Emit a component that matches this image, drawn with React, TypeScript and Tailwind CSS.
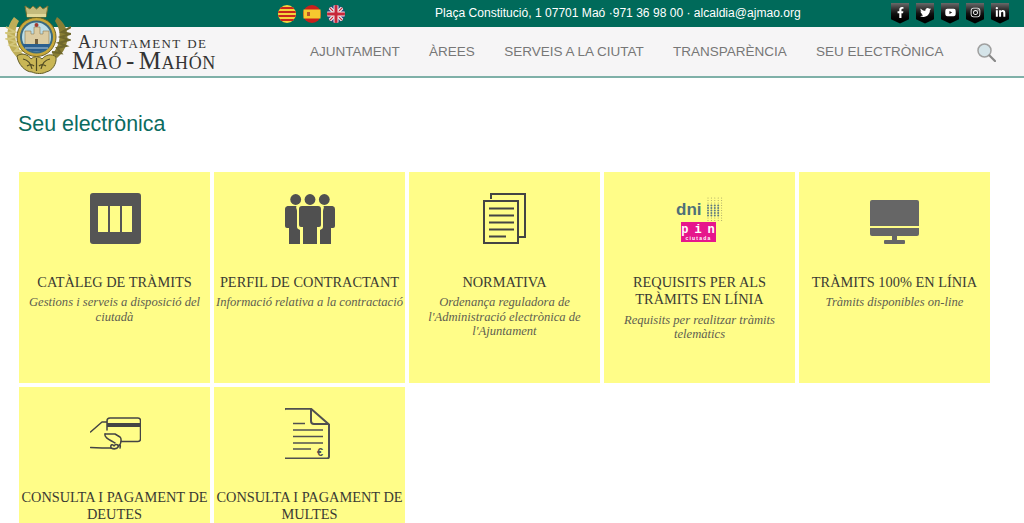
import { FaFacebookF, FaTwitter, FaYoutube, FaInstagram, FaLinkedinIn } from "react-icons/fa";
import type { ReactNode } from "react";

function Crest() {
    return (
        <svg width="66" height="71" viewBox="0 0 66 71">
            {/* laurels */}
            <path d="M9 14C-1 26 0 44 13 55L18 51C9 42 8 28 14 18Z" fill="#bfae58" />
            <path d="M52 14C66 24 66 44 52 55L47 51C56 42 57 28 50 18Z" fill="#8a7f34" />
            <path d="M1 24l9 5-9 1 9 4-8 2 9 3-6 3 9 2-4 4 8 0" fill="none" stroke="#d3c67a" strokeWidth="1.800" />
            <path d="M66 24l-9 5 8 2-9 3 8 3-10 3 7 3-9 2 4 5-9-1" fill="none" stroke="#6f682c" strokeWidth="2.200" />
            {/* bottom scroll */}
            <path d="M12 53c5-4 12-1 14 3 3-3 8-3 11 0 3-4 10-6 14-2 1 7-4 14-10 15-3 2-10 2-14 0-7 0-14-8-15-16Z" fill="#c9b655" stroke="#615b28" strokeWidth="1" />
            <path d="M18 56c5 1 8 5 9 10M45 56c-5 1-8 5-9 10M31.500 55v13M22 63c3-2 5-2 7 0M41 63c-3-2-5-2-7 0" stroke="#4f4a22" strokeWidth="1.200" fill="none" />
            {/* crown */}
            <path d="M20 3l5 3 3-3 3.500 3 3.500-3 3 3 5-3-2 11H22Z" fill="#c4bb7c" stroke="#7d7534" strokeWidth="1" />
            <rect x="22" y="11" width="19" height="3" fill="#e2d99a" />
            {/* shield */}
            <circle cx="31.500" cy="34" r="19.500" fill="#c9a93a" stroke="#6d6226" strokeWidth="1" />
            <circle cx="31.500" cy="34" r="16.500" fill="#3a6a80" />
            <circle cx="31.500" cy="34" r="14.500" fill="#bcdde6" />
            <path d="M20 28h6v3h3v-7h6v7h3v-3h6v14H20Z" fill="#dccca2" stroke="#8b7a55" strokeWidth="0.600" />
            <rect x="30" y="36" width="3" height="6" fill="#6f5c3c" />
            <path d="M17.500 41h28c-2 5-7 7.500-14 7.500s-12-2.500-14-7.500Z" fill="#2b5f8f" />
            <path d="M20 45h23" stroke="#dbe8ee" strokeWidth="0.800" />
            <circle cx="31.500" cy="22" r="2" fill="#a33c30" />
        </svg>
    );
}

function FlagCat() {
    return (
        <svg width="18" height="18" viewBox="0 0 18 18">
            <clipPath id="cat"><circle cx="9" cy="9" r="9" /></clipPath>
            <g clipPath="url(#cat)">
                <rect width="18" height="18" fill="#f5d33a" />
                <path d="M0 2h18v2H0zM0 6h18v2H0zM0 10h18v2H0zM0 14h18v2H0z" fill="#c8261c" />
            </g>
        </svg>
    );
}

function FlagEs() {
    return (
        <svg width="18" height="18" viewBox="0 0 18 18">
            <circle cx="9" cy="9" r="9" fill="#c8201c" />
            <rect x="0.500" y="4.500" width="17" height="9" fill="#f6c92f" />
            <rect x="4" y="7" width="3" height="4" fill="#b8552a" />
        </svg>
    );
}

function FlagUk() {
    return (
        <svg width="18" height="18" viewBox="0 0 18 18">
            <clipPath id="uk"><circle cx="9" cy="9" r="9" /></clipPath>
            <g clipPath="url(#uk)">
                <rect width="18" height="18" fill="#2c3f78" />
                <path d="M0 0L18 18M18 0L0 18" stroke="#eee" strokeWidth="3.500" />
                <path d="M0 0L18 18M18 0L0 18" stroke="#c8273a" strokeWidth="1.200" />
                <path d="M9 0V18M0 9H18" stroke="#eee" strokeWidth="5" />
                <path d="M9 0V18M0 9H18" stroke="#c8273a" strokeWidth="3" />
            </g>
        </svg>
    );
}

function Badge({ children }: { children: ReactNode }) {
    return (
        <div className="w-[18px] h-[21px] flex justify-center pt-[4px] text-white text-[11px] bg-gradient-to-b from-[#6a6a6a] via-[#111] to-[#000] [clip-path:polygon(0_0,100%_0,100%_80%,50%_100%,0_80%)]">
            {children}
        </div>
    );
}

function IconCatalog() {
    return (
        <svg width="51" height="51" viewBox="0 0 51 51">
            <rect width="51" height="51" rx="3" fill="#555" />
            <path d="M8 13h10v26H8zM20 13h10v26H20zM32 13h10v26H32z" fill="#fffd88" />
        </svg>
    );
}

function IconPeople() {
    return (
        <svg width="51" height="51" viewBox="0 0 51 51" fill="#505050">
            <circle cx="10.700" cy="6.500" r="5.400" />
            <circle cx="25" cy="6.500" r="5.400" />
            <circle cx="39.300" cy="6.500" r="5.400" />
            <path d="M17 13h16a3 3 0 0 1 3 3v16a2 2 0 0 1-2 2h-2v17H18V34h-2a2 2 0 0 1-2-2V16a3 3 0 0 1 3-3z" />
            <path d="M2.500 13H11.500C10.500 15 12 16 12 18V34c0 2 2 2 3 3V51H4V35H2a2 2 0 0 1-2-2V16a3 3 0 0 1 2.500-3z" />
            <path d="M47.500 13H38.500C39.500 15 38 16 38 18V34c0 2-2 2-3 3V51H46V35h2a2 2 0 0 0 2-2V16a3 3 0 0 0-2.500-3z" />
        </svg>
    );
}

function IconDocs() {
    return (
        <svg width="51" height="51" viewBox="0 0 51 51" fill="none" stroke="#444" strokeWidth="2">
            <path d="M11 6V1H45V44H39" />
            <rect x="4" y="8" width="34" height="42" />
            <path d="M9 15.500H34M9 22.500H34M9 29.500H34M9 36.500H34M9 43.500H26" strokeWidth="2.200" />
        </svg>
    );
}

function IconDni() {
    const dots = [];
    for (let row = 0; row < 10; row++) {
        for (let col = 0; col < 5; col++) {
            const inner = row > 2 && row < 8 && col < 4;
            dots.push(<circle key={`${row}-${col}`} cx={33 + col * 3.4} cy={5 + row * 2.5} r={inner ? 1 : 0.5} fill={inner ? "#5d7a80" : "#9a9a60"} />);
        }
    }
    return (
        <svg width="51" height="51" viewBox="0 0 51 51">
            {dots}
            <text x="1" y="22" fontFamily="Liberation Sans, sans-serif" fontSize="17" fontWeight="700" fill="#4f7078">dni</text>
            <rect x="6" y="29" width="35" height="20" fill="#e6168c" />
            <text x="26" y="40" textAnchor="middle" fontFamily="Liberation Mono, monospace" fontSize="12" fontWeight="700" letterSpacing="6" fill="#fff">pin</text>
            <text x="23.500" y="47" textAnchor="middle" fontFamily="Liberation Sans, sans-serif" fontSize="5" fontWeight="700" letterSpacing="1.200" fill="#fff">ciutada</text>
        </svg>
    );
}

function IconMonitor() {
    return (
        <svg width="51" height="51" viewBox="1 0 51 51" fill="#666">
            <path d="M3 7H48a2 2 0 0 1 2 2V33H1V9a2 2 0 0 1 2-2z" />
            <path d="M1 35H50V41a2 2 0 0 1-2 2H3a2 2 0 0 1-2-2z" />
            <rect x="23" y="43" width="5" height="4" />
            <rect x="15" y="47" width="21" height="4" rx="1" />
        </svg>
    );
}

function IconCard() {
    return (
        <svg width="51" height="51" viewBox="0 0 51 51" fill="none" stroke="#444" strokeWidth="1.500" strokeLinecap="round" strokeLinejoin="round">
            <path d="M17 22V13a3 3 0 0 1 3-3H48a2.500 2.500 0 0 1 2.500 2.500V31a2.500 2.500 0 0 1-2.500 2.500H31" />
            <rect x="17" y="15" width="33.500" height="4" fill="#444" stroke="none" />
            <path d="M0.500 24L12 14H17M15 26H25L30 29C32 31 31 36 29 38C27 41 25 42 21 40H12L0.500 39.500" />
            <path d="M21 40C20 36 23 36 24 38C25 36 28 36 28 38C30 36 31 37 30 40" />
            <path d="M15 26C14 29 18 31 25 35" />
        </svg>
    );
}

function IconBill() {
    return (
        <svg width="51" height="51" viewBox="3 0 51 51" fill="none" stroke="#505050" strokeWidth="1.500" strokeLinejoin="round">
            <path d="M29 0.800H4a2 2 0 0 0-2 2V49a1.500 1.500 0 0 0 1.500 1.500H45a2 2 0 0 0 2-2V16.500Z" strokeWidth="2" />
            <path d="M29 1V13a3 3 0 0 0 3 3H47" strokeWidth="2" />
            <path d="M11 15.500H23M11 22H41M11 28.500H41M11 35H41M11 41H29" />
            <text x="35" y="47.500" fontFamily="Liberation Sans, sans-serif" fontSize="11" fontWeight="700" fill="#505050" stroke="none">€</text>
        </svg>
    );
}

const cards = [
    { icon: <IconCatalog />, title: "Catàleg de tràmits", sub: "Gestions i serveis a disposició del ciutadà" },
    { icon: <IconPeople />, title: "Perfil de contractant", sub: "Informació relativa a la contractació" },
    { icon: <IconDocs />, title: "Normativa", sub: "Ordenança reguladora de l'Administració electrònica de l'Ajuntament" },
    { icon: <IconDni />, title: "Requisits per als tràmits en línia", sub: "Requisits per realitzar tràmits telemàtics" },
    { icon: <IconMonitor />, title: "Tràmits 100% en línia", sub: "Tràmits disponibles on-line" },
    { icon: <IconCard />, title: "Consulta i pagament de deutes", sub: "" },
    { icon: <IconBill />, title: "Consulta i pagament de multes", sub: "" },
];

const navItems = ["Ajuntament", "Àrees", "Serveis a la ciutat", "Transparència", "Seu electrònica"];

export default function App() {
    return (
        <div className="relative h-[523px] overflow-hidden bg-white font-['Liberation_Sans',sans-serif]">
            <div className="h-[27px] bg-[#006a5a] flex items-center text-white">
                <div className="flex gap-[6.5px] ml-[278px]">
                    <FlagCat />
                    <FlagEs />
                    <FlagUk />
                </div>
                <p className="ml-[90px] text-[12.07px] whitespace-nowrap">Plaça Constitució, 1 07701 Maó ·971 36 98 00 · alcaldia@ajmao.org</p>
                <div className="flex gap-[7px] ml-auto mr-[15px] mt-[-1px]">
                    <Badge><FaFacebookF /></Badge>
                    <Badge><FaTwitter /></Badge>
                    <Badge><FaYoutube /></Badge>
                    <Badge><FaInstagram /></Badge>
                    <Badge><FaLinkedinIn /></Badge>
                </div>
            </div>
            <div className="absolute left-[5px] top-[3px] blur-[0.4px]">
                <Crest />
            </div>
            <div className="h-[51px] bg-[#f6f5f6] border-b-2 border-[#7fb0a8] flex items-center">
                <div className="ml-[72px] w-[146px] font-['Liberation_Serif',serif] text-[#333] [font-variant:small-caps]">
                    <div className="pl-[6px] text-[18px] leading-[18px] tracking-[1.35px] whitespace-nowrap">Ajuntament de</div>
                    <div className="text-[25px] leading-[20px] tracking-[0.6px] [word-spacing:-3px] whitespace-nowrap">Maó - Mahón</div>
                </div>
                <nav className="flex items-center ml-[92px] gap-[29.3px] text-[13.5px] text-[#777] uppercase whitespace-nowrap pt-[1px]">
                    {navItems.map((item) => (
                        <span key={item}>{item}</span>
                    ))}
                    <svg width="19" height="19" viewBox="0 0 19 19" className="ml-[4px]">
                        <circle cx="7.500" cy="7.500" r="6.500" fill="#d5e4e9" stroke="#a0a0a0" strokeWidth="1.500" />
                        <path d="M12.500 12.500L18 18" stroke="#888" strokeWidth="2.200" strokeLinecap="round" />
                    </svg>
                </nav>
            </div>
            <main className="px-[19px]">
                <h1 className="mt-[32px] ml-[-1px] text-[21.4px] leading-[28px] text-[#0b6b5f]">Seu electrònica</h1>
                <div className="mt-[34px] grid grid-cols-[repeat(5,191px)] auto-rows-[210.5px] gap-[4px] font-['Liberation_Serif',serif]">
                    {cards.map((card) => (
                        <div key={card.title} className="bg-[#fffd88] flex flex-col items-center pt-[21px] text-center">
                            <div className="ml-[2px]">{card.icon}</div>
                            <h2 className="mt-[30px] text-[14.35px] leading-[17.3px] text-[#3a3a33] uppercase">{card.title}</h2>
                            {card.sub && <p className="mt-[4px] text-[12.6px] leading-[14.5px] italic text-[#5e5e50]">{card.sub}</p>}
                        </div>
                    ))}
                </div>
            </main>
        </div>
    );
}
